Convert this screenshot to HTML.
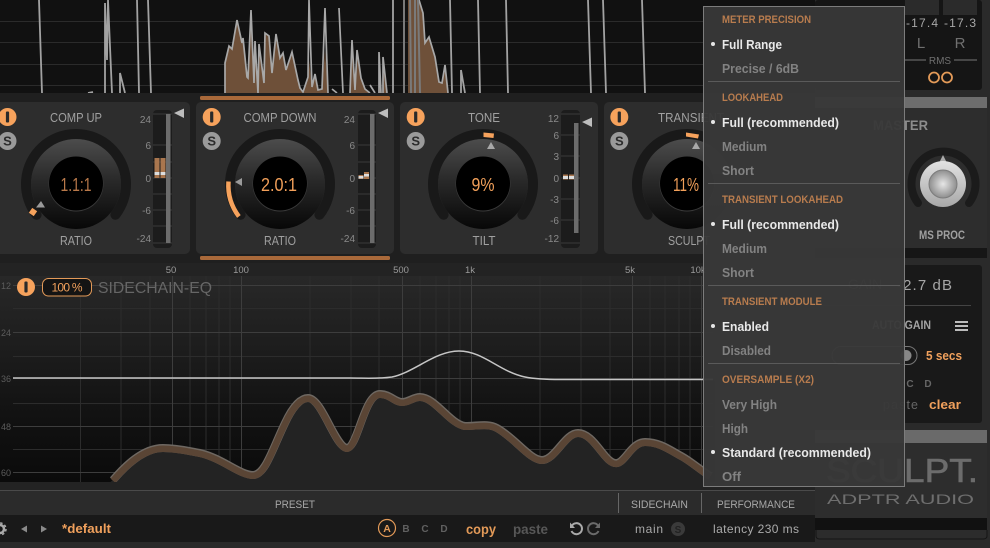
<!DOCTYPE html>
<html><head><meta charset="utf-8"><style>
html,body{margin:0;padding:0;background:#232323;width:990px;height:548px;overflow:hidden}
svg{display:block}
text{font-family:"Liberation Sans",sans-serif}
.mh{font-size:11px;fill:#b87c4e;font-weight:bold}
.on{font-size:12.5px;fill:#e8e8e8;font-weight:bold}
.off{font-size:12.5px;fill:#828282;font-weight:bold}
.lb{font-size:10px;fill:#8a8a8a}
.tt{font-size:13px;fill:#a0a0a0;text-anchor:middle}
.val{font-size:18px;fill:#f2a05a;text-anchor:middle}
.fq{font-size:9.5px;fill:#9a9a9a;text-anchor:middle}
.db{font-size:9px;fill:#5c5c5c}
</style></head><body>
<svg width="990" height="548" viewBox="0 0 990 548" xmlns="http://www.w3.org/2000/svg">
<defs>
<linearGradient id="kb" x1="0" y1="0" x2="0" y2="1"><stop offset="0" stop-color="#4c4c4c"/><stop offset=".45" stop-color="#2a2a2a"/><stop offset="1" stop-color="#070707"/></linearGradient>
<linearGradient id="eqbg" x1="0" y1="0" x2="0" y2="1"><stop offset="0" stop-color="#282828"/><stop offset=".35" stop-color="#1d1d1d"/><stop offset=".7" stop-color="#111"/><stop offset="1" stop-color="#0b0b0b"/></linearGradient>
<linearGradient id="wk" x1="0" y1="0" x2="0" y2="1"><stop offset="0" stop-color="#e2e2e2"/><stop offset="1" stop-color="#a8a8a8"/></linearGradient>
<radialGradient id="wi"><stop offset="0" stop-color="#e6e6e6"/><stop offset="1" stop-color="#8e8e8e"/></radialGradient>
<clipPath id="spec"><rect x="0" y="0" width="703" height="93"/></clipPath>
<clipPath id="eqc"><rect x="13" y="276" width="700" height="206"/></clipPath>
<g id="knob">
<path d="M-39.4 30.8A50 50 0 1 1 39.4 30.8" fill="none" stroke="#191919" stroke-width="10" stroke-linecap="round"/>
<circle r="45" fill="url(#kb)"/>
<circle r="27.5" fill="#3a3a3a"/>
<circle r="27" cy="-.5" fill="#000"/>
</g>
<g id="ib"><circle r="9" fill="#f6a25c"/><rect x="-1.6" y="-5.5" width="3.2" height="11" rx="1" fill="#2a2a2a"/></g>
<g id="sb"><circle r="9" fill="#9a9a9a"/></g>
</defs>

<!-- base -->
<rect width="990" height="548" fill="#232323"/>
<!-- spectrum -->
<rect width="815" height="93" fill="#111"/>
<path d="M0 21.500H703M0 42.500H703M0 64.500H703M0 85.500H703" stroke="#2b2b2b"/>
<g clip-path="url(#spec)">
<path d="M225 93V63L229 46L232 49L237 20L242 43L243 38L247 77L248 78L251 10L254 83L255 41L258 93L259 44L264 83L265 33L269 36L272 73L276 34L280 58L283 53L286 70L292 52L298 80L300 88L303 92L308 77L309 60L312 87L315 74L318 90L322 89L325 50L328 93ZM350 93L352 40L355 90L357 50L361 78L365 89L370 93ZM379 93V52L381 93ZM383 93V57L387 93ZM408 93V0H419L423 13L425 43L429 37L435 57L439 82L442 83L445 65L448 93Z" fill="#6e5039"/>
<path d="M225 93V63L229 46L232 49L237 20L242 43L243 38L247 77L248 78L251 10L254 83L255 41L258 93L259 44L264 83L265 33L269 36L272 73L276 34L280 58L283 53L286 70L292 52L298 80L300 88L303 92L308 77L309 0L312 87L315 74L318 90L322 89L325 8L328 93M332 89L337 93M339 8L343 93M350 93L352 40L355 90L357 50L361 78L365 89L370 93M370 85L375 93M379 93V52L381 93M383 93V57L387 93M419 0L423 13L425 43L429 37L435 57L439 82L442 83L445 65L448 93" fill="none" stroke="#a8a8a8" stroke-width="1.700"/>
<path d="M404 0V93M410 0L411 93M415 0V93M418 0L420 93" fill="none" stroke="#7a7a7a" stroke-width="2"/>
<path d="M39 0L42 93M105 93V3L107 60L108 0L112 93M120 93V73L125 93M137 0L139 93M148 0L151 93M393 0V93M450 0L452 93M461 93V70L465 93M478 0L480 93M506 0L508 93M588 0L591 93M603 0L606 93M642 0L645 93M88 93L93 92" fill="none" stroke="#a2a2a2" stroke-width="1.800"/>
</g>
<rect y="93" width="815" height="170" fill="#1f1f1f"/>
<!-- orange bars -->
<rect x="200" y="96" width="190" height="4" rx="1.500" fill="#a9693a"/>
<rect x="200" y="256" width="190" height="4" rx="1.500" fill="#a9693a"/>

<!-- modules -->
<rect x="-10" y="102" width="200" height="152" rx="5" fill="#2d2d2d"/>
<rect x="196" y="102" width="198" height="152" rx="5" fill="#2d2d2d"/>
<rect x="400" y="102" width="198" height="152" rx="5" fill="#2d2d2d"/>
<rect x="604" y="102" width="198" height="152" rx="5" fill="#2d2d2d"/>

<!-- meters -->
<g fill="#1c1c1c"><rect x="153" y="110" width="19" height="138" rx="4"/><rect x="358" y="110" width="18" height="138" rx="4"/><rect x="561" y="110" width="19" height="138" rx="4"/></g>
<path d="M153 114H172M153 145H172M153 162H172M153 178H172M153 194H172M153 210H172M153 226H172M153 243H172M358 114H376M358 145H376M358 162H376M358 178H376M358 194H376M358 210H376M358 226H376M358 243H376M561 114H580M561 135H580M561 156H580M561 178H580M561 199H580M561 220H580M561 243H580" stroke="#3a3a3a"/>
<g fill="#6c6c6c"><rect x="166" y="114" width="4.500" height="129"/><rect x="370" y="114" width="4.500" height="129"/><rect x="574" y="123" width="4.500" height="110"/></g>
<g fill="#bdbdbd"><path d="M174 113L184 108.500V118ZM378 113L388 108.500V118ZM582 122L592 117.500V127Z"/></g>
<g fill="#a9764e"><rect x="154.500" y="158" width="5" height="20"/><rect x="160.500" y="158" width="5" height="20"/><rect x="358.500" y="175" width="5" height="4"/><rect x="364" y="172" width="5" height="7"/><rect x="563" y="174.500" width="5" height="5"/><rect x="569" y="174.500" width="5" height="5"/></g>
<g fill="#ddd"><rect x="154.500" y="172" width="5" height="3"/><rect x="160.500" y="172" width="5" height="3"/><rect x="358.500" y="176" width="5" height="2.500"/><rect x="364" y="174" width="5" height="2.500"/><rect x="563" y="176" width="5" height="3"/><rect x="569" y="176" width="5" height="3"/></g>
<text class="lb" x="151" y="123" text-anchor="end">24</text><text class="lb" x="151" y="149" text-anchor="end">6</text><text class="lb" x="151" y="182" text-anchor="end">0</text><text class="lb" x="151" y="214" text-anchor="end">-6</text><text class="lb" x="151" y="242" text-anchor="end">-24</text>
<text class="lb" x="355" y="123" text-anchor="end">24</text><text class="lb" x="355" y="149" text-anchor="end">6</text><text class="lb" x="355" y="182" text-anchor="end">0</text><text class="lb" x="355" y="214" text-anchor="end">-6</text><text class="lb" x="355" y="242" text-anchor="end">-24</text>
<text class="lb" x="559" y="122" text-anchor="end">12</text><text class="lb" x="559" y="139" text-anchor="end">6</text><text class="lb" x="559" y="160" text-anchor="end">3</text><text class="lb" x="559" y="182" text-anchor="end">0</text><text class="lb" x="559" y="203" text-anchor="end">-3</text><text class="lb" x="559" y="224" text-anchor="end">-6</text><text class="lb" x="559" y="242" text-anchor="end">-12</text>

<!-- knobs -->
<use href="#knob" x="76" y="184"/><use href="#knob" x="280" y="184"/><use href="#knob" x="483" y="184"/><use href="#knob" x="687" y="184"/>
<!-- knob marks -->
<rect x="30" y="209" width="6" height="6" transform="rotate(35 33 212)" fill="#f6a25c"/>
<path d="M36 207.500L41 201L45 207.500Z" fill="#9a9a9a"/>
<path d="M238.900 216.500A52 52 0 0 1 228.500 181.500" fill="none" stroke="#f6a25c" stroke-width="4.500"/>
<path d="M235 182L242 178V186Z" fill="#9a9a9a"/>
<path d="M483.500 132.500L494 133.500L493.500 138L483.500 137Z" fill="#f6a25c"/>
<path d="M487 149L491 142L495 149Z" fill="#a8a8a8"/>
<path d="M686 132.500L699 134.500L698 138.500L686 136.500Z" fill="#f6a25c"/>
<path d="M692 149L696 142L700 149Z" fill="#a8a8a8"/>
<!-- I / S buttons -->
<use href="#ib" x="7.500" y="117"/><use href="#sb" x="7.500" y="141"/>
<use href="#ib" x="211.700" y="117"/><use href="#sb" x="211.700" y="141"/>
<use href="#ib" x="415.700" y="117"/><use href="#sb" x="415.700" y="141"/>
<use href="#ib" x="619.300" y="117"/><use href="#sb" x="619.300" y="141"/>
<g font-size="13" font-weight="bold" fill="#2c2c2c" text-anchor="middle"><text x="7.500" y="145.500">S</text><text x="211.700" y="145.500">S</text><text x="415.700" y="145.500">S</text><text x="619.300" y="145.500">S</text></g>
<text class="tt" x="76" y="122" textLength="52" lengthAdjust="spacingAndGlyphs">COMP UP</text><text class="tt" x="280" y="122" textLength="73" lengthAdjust="spacingAndGlyphs">COMP DOWN</text><text class="tt" x="484" y="122" textLength="32" lengthAdjust="spacingAndGlyphs">TONE</text><text class="tt" x="691" y="122" textLength="66" lengthAdjust="spacingAndGlyphs">TRANSIENT</text>
<text class="tt" x="76" y="245" textLength="32" lengthAdjust="spacingAndGlyphs">RATIO</text><text class="tt" x="280" y="245" textLength="32" lengthAdjust="spacingAndGlyphs">RATIO</text><text class="tt" x="484" y="245" textLength="23" lengthAdjust="spacingAndGlyphs">TILT</text><text class="tt" x="689" y="245" textLength="42" lengthAdjust="spacingAndGlyphs">SCULPT</text>
<text class="val" x="76" y="191" style="fill:#b9794a" textLength="31" lengthAdjust="spacingAndGlyphs">1.1:1</text><text class="val" x="279" y="191" textLength="36" lengthAdjust="spacingAndGlyphs">2.0:1</text><text class="val" x="483" y="191" textLength="23" lengthAdjust="spacingAndGlyphs">9%</text><text class="val" x="686" y="191" textLength="26" lengthAdjust="spacingAndGlyphs">11%</text>

<!-- EQ -->
<rect y="263" width="815" height="227" fill="#232323"/>
<rect x="0" y="276" width="715" height="206" fill="url(#eqbg)"/>
<g clip-path="url(#eqc)">
<path d="M80.500 276V482M121 276V482M150 276V482M190 276V482M206 276V482M219 276V482M230 276V482M310 276V482M351 276V482M379 276V482M420 276V482M436 276V482M449 276V482M460 276V482M540 276V482M581 276V482M610 276V482M650 276V482M665 276V482M679 276V482M690 276V482M13 308.500H715M13 356.500H715M13 403.500H715M13 449.500H715" stroke="#2c2c2c"/>
<path d="M172.500 276V482M241.500 276V482M402.500 276V482M471.500 276V482M632.500 276V482M701.500 276V482M13 285.500H715M13 332.500H715M13 378.500H715M13 426.500H715M13 472.500H715" stroke="#3d3d3d"/>
<path d="M100 490L113 480C125 466 143 448 163 448C178 448 188 451 200 453C222 458 240 475 253 475C265 475 272 450 285 423C292 408 300 398 308 398C322 398 335 447 347 448C358 447 364 394 380 394C390 394 395 402 402 402C409 402 413 397 420 397C435 397 450 424 465 426C478 426 488 423 497 428C515 438 530 460 542 460C555 460 565 433 578 433C595 433 605 465 617 463C625 462 632 442 645 442C660 442 670 450 683 457C690 461 697 467 710 476V490Z" fill="#232323"/>
<path d="M113 480C125 466 143 448 163 448C178 448 188 451 200 453C222 458 240 475 253 475C265 475 272 450 285 423C292 408 300 398 308 398C322 398 335 447 347 448C358 447 364 394 380 394C390 394 395 402 402 402C409 402 413 397 420 397C435 397 450 424 465 426C478 426 488 423 497 428C515 438 530 460 542 460C555 460 565 433 578 433C595 433 605 465 617 463C625 462 632 442 645 442C660 442 670 450 683 457C690 461 697 467 710 476" fill="none" stroke="#6e6862" stroke-width="8"/>
<path d="M113 480C125 466 143 448 163 448C178 448 188 451 200 453C222 458 240 475 253 475C265 475 272 450 285 423C292 408 300 398 308 398C322 398 335 447 347 448C358 447 364 394 380 394C390 394 395 402 402 402C409 402 413 397 420 397C435 397 450 424 465 426C478 426 488 423 497 428C515 438 530 460 542 460C555 460 565 433 578 433C595 433 605 465 617 463C625 462 632 442 645 442C660 442 670 450 683 457C690 461 697 467 710 476" fill="none" stroke="#5a4535" stroke-width="6.500" transform="translate(0 .8)"/>
<path d="M13 378H350C365 378 378 379 392 377C415 372 435 351 459 351C483 351 500 372 525 377C535 379 545 379.500 560 379.500H715" fill="none" stroke="#c6c6c6" stroke-width="1.500"/>
</g>
<text class="db" x="1" y="289">12</text><text class="db" x="1" y="336">24</text><text class="db" x="1" y="382">36</text><text class="db" x="1" y="430">48</text><text class="db" x="1" y="476">60</text>
<text class="fq" x="171" y="273">50</text><text class="fq" x="241" y="273">100</text><text class="fq" x="401" y="273">500</text><text class="fq" x="470" y="273">1k</text><text class="fq" x="630" y="273">5k</text><text class="fq" x="698" y="273">10k</text>
<use href="#ib" x="26" y="287"/>
<rect x="42.500" y="278.500" width="49" height="17.500" rx="6" fill="#141414" stroke="#e39a58"/>
<text x="67" y="291.500" font-size="12" fill="#f0a05c" text-anchor="middle" textLength="31">100 %</text>
<text x="98" y="293" font-size="15.500" fill="#666" textLength="114" lengthAdjust="spacingAndGlyphs">SIDECHAIN-EQ</text>

<!-- bottom bands -->
<rect y="490" width="815" height="25" fill="#2b2b2b"/><path d="M0 490.500H815" stroke="#4a4a4a"/>
<path d="M618.500 493V513M701.500 493V513" stroke="#666"/>
<text x="295" y="508" font-size="11" fill="#a8a8a8" text-anchor="middle" textLength="40" lengthAdjust="spacingAndGlyphs">PRESET</text>
<text x="659.500" y="508" font-size="11" fill="#a8a8a8" text-anchor="middle" textLength="57" lengthAdjust="spacingAndGlyphs">SIDECHAIN</text>
<text x="756" y="508" font-size="11" fill="#a8a8a8" text-anchor="middle" textLength="78" lengthAdjust="spacingAndGlyphs">PERFORMANCE</text>
<rect y="515" width="815" height="27" fill="#191919"/>
<rect y="542" width="815" height="6" fill="#2a2a2a"/>
<circle cx="0" cy="529" r="4" fill="none" stroke="#aaa" stroke-width="2.500"/>
<circle cx="0" cy="529" r="6" fill="none" stroke="#aaa" stroke-width="1.500" stroke-dasharray="2.500 2.200"/>
<path d="M27 525.500V532.500L21 529ZM41 525.500V532.500L47 529Z" fill="#8a8a8a"/>
<text x="62" y="533" font-size="13" font-weight="bold" fill="#f0a05c" textLength="49" lengthAdjust="spacingAndGlyphs">*default</text>
<circle cx="387" cy="528" r="8.500" fill="none" stroke="#e39a58" stroke-width="1.200"/>
<text x="387" y="532" font-size="10.500" font-weight="bold" fill="#e39a58" text-anchor="middle">A</text>
<g font-size="10" font-weight="bold" fill="#606060" text-anchor="middle"><text x="406" y="532">B</text><text x="425" y="532">C</text><text x="444" y="532">D</text></g>
<text x="466" y="534" font-size="13.500" font-weight="bold" fill="#e39a58" textLength="30" lengthAdjust="spacingAndGlyphs">copy</text>
<text x="513" y="534" font-size="13.500" fill="#575757" font-weight="bold" textLength="35" lengthAdjust="spacingAndGlyphs">paste</text>
<path d="M572 525.500A5.500 5.500 0 1 1 571.500 531" fill="none" stroke="#aaa" stroke-width="2"/><path d="M570 522.500V528H575Z" fill="#aaa"/>
<path d="M598 525.500A5.500 5.500 0 1 0 598.500 531" fill="none" stroke="#6a6a6a" stroke-width="2"/><path d="M600 522.500V528H595Z" fill="#6a6a6a"/>
<text x="635" y="533" font-size="12" fill="#a8a8a8" textLength="28">main</text>
<circle cx="678" cy="529" r="7" fill="#3a3a3a"/><text x="678" y="533" font-size="10" font-weight="bold" fill="#222" text-anchor="middle">S</text>
<text x="713" y="533" font-size="12" fill="#ababab" textLength="86">latency 230 ms</text>

<!-- right column -->
<rect x="815" y="0" width="175" height="548" fill="#2a2a2a"/>
<rect x="815" y="0" width="167" height="90" rx="3" fill="#151515"/>
<rect x="905" y="0" width="34" height="15" fill="#2b2b2b"/><rect x="943" y="0" width="34" height="15" fill="#2b2b2b"/>
<text x="906" y="27" font-size="12" fill="#a8a8a8" textLength="32">-17.4</text><text x="944" y="27" font-size="12" fill="#a8a8a8" textLength="32">-17.3</text>
<text x="921" y="48" font-size="15" fill="#707070" text-anchor="middle">L</text><text x="960" y="48" font-size="15" fill="#707070" text-anchor="middle">R</text>
<path d="M905 60H926M954 60H977" stroke="#777"/>
<text x="940" y="64" font-size="10" fill="#707070" text-anchor="middle">RMS</text>
<circle cx="934" cy="77.500" r="5" fill="none" stroke="#e39a58" stroke-width="1.800"/><circle cx="947" cy="77.500" r="5" fill="none" stroke="#e39a58" stroke-width="1.800"/>
<rect x="815" y="97" width="172" height="11" fill="#6d6d6d"/>
<rect x="815" y="108" width="172" height="140" fill="#2d2d2d"/>
<text x="873" y="130" font-size="14" font-weight="bold" fill="#8c8c8c" textLength="55" lengthAdjust="spacingAndGlyphs">MASTER</text>
<path d="M918 203A32 32 0 1 1 969 203" fill="none" stroke="#1b1b1b" stroke-width="8" stroke-linecap="round"/>
<path d="M939.500 162L943 155L946.500 162Z" fill="#aaa"/>
<circle cx="943" cy="184" r="23" fill="url(#wk)"/><circle cx="943" cy="184" r="14" fill="url(#wi)"/><circle cx="943" cy="184" r="14" fill="none" stroke="#7c7c7c"/>
<text x="942" y="239" font-size="12" font-weight="bold" fill="#a0a0a0" text-anchor="middle" textLength="46" lengthAdjust="spacingAndGlyphs">MS PROC</text>
<rect x="815" y="248" width="172" height="10" fill="#161616"/>
<rect x="815" y="265" width="167" height="158" rx="3" fill="#191919"/>
<text x="848" y="289" font-size="14" fill="#666">GAIN</text>
<text x="952" y="290" font-size="15" fill="#a6a6a6" text-anchor="end" textLength="55">-2.7 dB</text>
<path d="M818 305.500H971" stroke="#444"/>
<text x="872" y="329" font-size="12" font-weight="bold" fill="#a4a4a4" textLength="59" lengthAdjust="spacingAndGlyphs">AUTO GAIN</text>
<path d="M955 322H968M955 326H968M955 330H968" stroke="#bbb" stroke-width="2"/>
<rect x="832" y="346.500" width="85" height="18" rx="9" fill="none" stroke="#777"/>
<circle cx="906" cy="355.500" r="5.500" fill="#888"/>
<text x="926" y="360" font-size="12.500" font-weight="bold" fill="#f0a05c" textLength="36" lengthAdjust="spacingAndGlyphs">5 secs</text>
<text x="910" y="387" font-size="10" font-weight="bold" fill="#666" text-anchor="middle">C</text><text x="928" y="387" font-size="10" font-weight="bold" fill="#666" text-anchor="middle">D</text>
<text x="883" y="409" font-size="12.500" fill="#666" textLength="35">paste</text>
<text x="929" y="409" font-size="13" font-weight="bold" fill="#f0a05c" textLength="32" lengthAdjust="spacingAndGlyphs">clear</text>
<rect x="815" y="430" width="172" height="13" fill="#6a6a6a"/>
<rect x="815" y="443" width="172" height="75" fill="#2d2d2d"/>
<text x="826" y="482" font-size="33" fill="#6c6c6c" stroke="#6c6c6c" stroke-width=".6" textLength="152" lengthAdjust="spacingAndGlyphs">SCULPT.</text>
<text x="827" y="504" font-size="14" fill="#6e6e6e" textLength="147" lengthAdjust="spacingAndGlyphs">ADPTR AUDIO</text>
<rect x="815" y="518" width="172" height="12" fill="#111"/>
<rect x="815" y="530" width="172" height="9" fill="#2c2c2c"/>
<path d="M816 530V536Q816 539 820 539H983Q987 539 987 536V530" fill="none" stroke="#151515"/>

<!-- menu -->
<rect x="703.500" y="6.500" width="201" height="480" fill="#383838" fill-opacity=".96" stroke="#7c7c7c"/>
<path d="M708 81.500H900M708 183.500H900M708 285.500H900M708 363.500H900" stroke="#5a5a5a"/>
<text class="mh" x="722" y="23" textLength="89" lengthAdjust="spacingAndGlyphs">METER PRECISION</text>
<text class="on" x="722" y="49" textLength="60" lengthAdjust="spacingAndGlyphs">Full Range</text><text class="off" x="722" y="73" textLength="77" lengthAdjust="spacingAndGlyphs">Precise / 6dB</text>
<text class="mh" x="722" y="101" textLength="61" lengthAdjust="spacingAndGlyphs">LOOKAHEAD</text>
<text class="on" x="722" y="127" textLength="117" lengthAdjust="spacingAndGlyphs">Full (recommended)</text><text class="off" x="722" y="151" textLength="45" lengthAdjust="spacingAndGlyphs">Medium</text><text class="off" x="722" y="175" textLength="32" lengthAdjust="spacingAndGlyphs">Short</text>
<text class="mh" x="722" y="203" textLength="121" lengthAdjust="spacingAndGlyphs">TRANSIENT LOOKAHEAD</text>
<text class="on" x="722" y="229" textLength="117" lengthAdjust="spacingAndGlyphs">Full (recommended)</text><text class="off" x="722" y="253" textLength="45" lengthAdjust="spacingAndGlyphs">Medium</text><text class="off" x="722" y="277" textLength="32" lengthAdjust="spacingAndGlyphs">Short</text>
<text class="mh" x="722" y="305" textLength="100" lengthAdjust="spacingAndGlyphs">TRANSIENT MODULE</text>
<text class="on" x="722" y="331" textLength="47" lengthAdjust="spacingAndGlyphs">Enabled</text><text class="off" x="722" y="355" textLength="49" lengthAdjust="spacingAndGlyphs">Disabled</text>
<text class="mh" x="722" y="383" textLength="92" lengthAdjust="spacingAndGlyphs">OVERSAMPLE (X2)</text>
<text class="off" x="722" y="409" textLength="55" lengthAdjust="spacingAndGlyphs">Very High</text><text class="off" x="722" y="433" textLength="26" lengthAdjust="spacingAndGlyphs">High</text><text class="on" x="722" y="457" textLength="149" lengthAdjust="spacingAndGlyphs">Standard (recommended)</text><text class="off" x="722" y="481" textLength="19" lengthAdjust="spacingAndGlyphs">Off</text>
<g fill="#e6e6e6"><circle cx="713" cy="44" r="2"/><circle cx="713" cy="122" r="2"/><circle cx="713" cy="224" r="2"/><circle cx="713" cy="326" r="2"/><circle cx="713" cy="452" r="2"/></g>
</svg>
</body></html>
